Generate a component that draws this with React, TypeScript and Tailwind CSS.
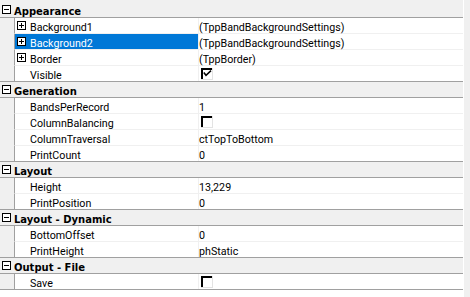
type Prop = {
  name: string;
  value?: string;
  expand?: boolean;
  check?: "on" | "off";
  selected?: boolean;
};

type Category = { title: string; props: Prop[] };

const categories: Category[] = [
  {
    title: "Appearance",
    props: [
      { name: "Background1", value: "(TppBandBackgroundSettings)", expand: true },
      { name: "Background2", value: "(TppBandBackgroundSettings)", expand: true, selected: true },
      { name: "Border", value: "(TppBorder)", expand: true },
      { name: "Visible", check: "on" },
    ],
  },
  {
    title: "Generation",
    props: [
      { name: "BandsPerRecord", value: "1" },
      { name: "ColumnBalancing", check: "off" },
      { name: "ColumnTraversal", value: "ctTopToBottom" },
      { name: "PrintCount", value: "0" },
    ],
  },
  {
    title: "Layout",
    props: [
      { name: "Height", value: "13,229" },
      { name: "PrintPosition", value: "0" },
    ],
  },
  {
    title: "Layout - Dynamic",
    props: [
      { name: "BottomOffset", value: "0" },
      { name: "PrintHeight", value: "phStatic" },
    ],
  },
  {
    title: "Output - File",
    props: [{ name: "Save", check: "off" }],
  },
];

function ToggleBox({ plus }: { plus?: boolean }) {
  return (
    <svg width="9" height="9" viewBox="0 0 9 9" className="mt-[3px] shrink-0">
      <rect x="0.5" y="0.5" width="8" height="8" fill="#fff" stroke="#000" />
      <path d="M2 4.5H7" stroke="#000" />
      {plus && <path d="M4.5 2V7" stroke="#000" />}
    </svg>
  );
}

function CheckBox({ checked }: { checked?: boolean }) {
  return (
    <svg width="12" height="12" viewBox="0 0 12 12" className="shrink-0">
      <rect x="0" y="0" width="12" height="12" fill="#fff" />
      <rect x="0" y="0" width="11" height="2" fill="#000" />
      <rect x="0" y="0" width="2" height="11" fill="#000" />
      <rect x="0" y="11" width="12" height="1" fill="#e3e3e3" />
      <rect x="11" y="0" width="1" height="12" fill="#e3e3e3" />
      {checked && (
        <path d="M2.8 4.5L5 7.3L10 2.6" fill="none" stroke="#000" strokeWidth="1.5" />
      )}
    </svg>
  );
}

function Row({ p, last }: { p: Prop; last: boolean }) {
  return (
    <div className={`flex h-[16px] ${last ? "border-b border-[#a0a0a0]" : ""}`}>
      <div className="w-[14px] bg-[#f0f0f0]" />
      <div
        className={`flex flex-1 border-l border-[#a0a0a0] bg-white ${
          last ? "" : "border-b border-b-[#f0f0f0]"
        }`}
      >
        <div
          className={`flex w-[183px] items-start ${
            p.expand ? "pl-[2px]" : "pl-[15px]"
          } ${p.selected ? "bg-[#0078d7] text-white" : "text-black"}`}
        >
          {p.expand && <ToggleBox plus />}
          <span className={`pt-[4px] leading-[11px] ${p.expand ? "ml-[4px]" : ""}`}>
            {p.name}
          </span>
        </div>
        <div className="flex flex-1 items-start border-l border-[#f0f0f0] text-black">
          {p.check ? (
            <div className="ml-[2px] pt-[2px]">
              <CheckBox checked={p.check === "on"} />
            </div>
          ) : (
            <span className="pt-[4px] leading-[11px]">{p.value}</span>
          )}
        </div>
      </div>
    </div>
  );
}

export default function App() {
  return (
    <div className="flex h-[297px] w-[470px] bg-white font-['Roboto',sans-serif] text-[10.7px]">
      <div className="w-[463px]">
        <div className="h-[2px] bg-[#f0f0f0]" />
        {categories.map((c) => (
          <div key={c.title}>
            <div className="flex h-[16px] items-start border-b border-[#a0a0a0] bg-[#f0f0f0] pl-[2px]">
              <ToggleBox />
              <span className="ml-[3px] pt-[4px] font-['DejaVu_Sans',sans-serif] text-[10px] leading-[11px] font-bold text-black">
                {c.title}
              </span>
            </div>
            {c.props.map((p, i) => (
              <Row key={p.name} p={p} last={i === c.props.length - 1} />
            ))}
          </div>
        ))}
      </div>
      <div className="w-px bg-white" />
      <div className="flex-1 bg-[#f0f0f0]" />
    </div>
  );
}
